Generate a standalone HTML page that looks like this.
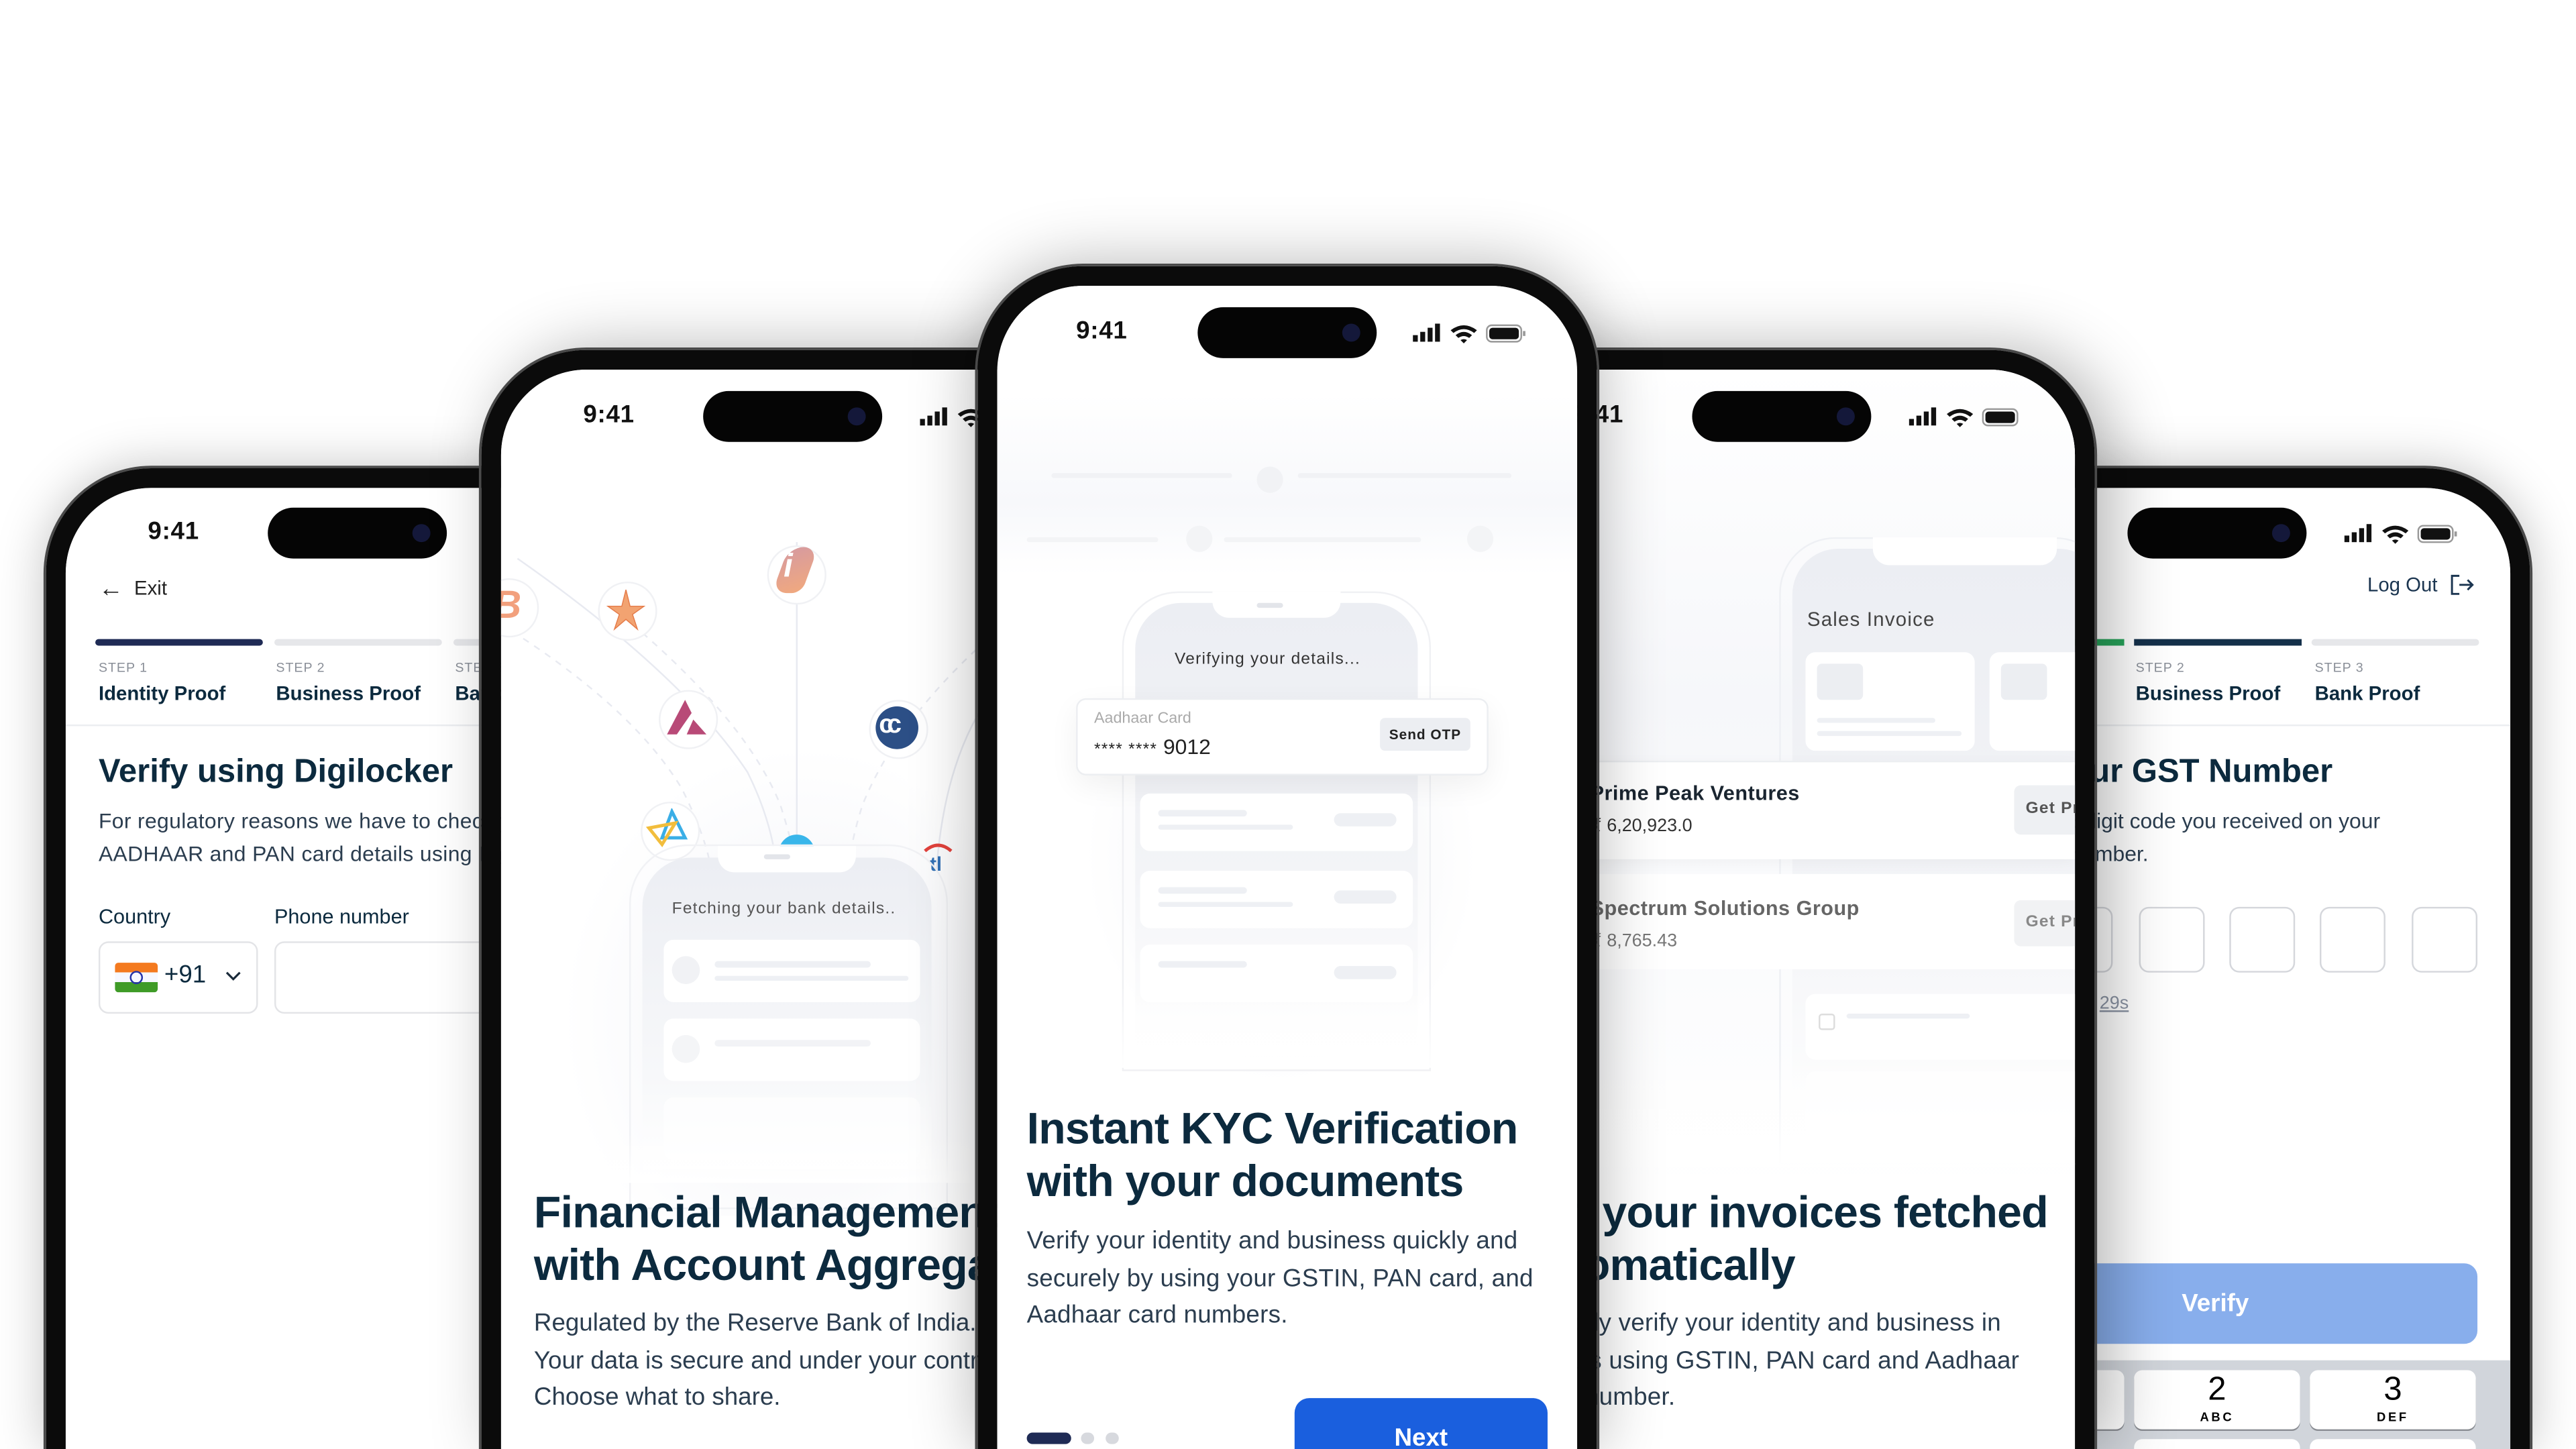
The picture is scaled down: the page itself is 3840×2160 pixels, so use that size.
<!DOCTYPE html>
<html><head><meta charset="utf-8">
<style>
html,body{margin:0;padding:0;background:#fff;width:3840px;height:2160px;overflow:hidden}
#stage{position:absolute;left:0;top:0;width:1568px;height:882px;transform:scale(2.44898);transform-origin:0 0;font-family:"Liberation Sans",sans-serif;overflow:hidden;background:#fff}
.phone{position:absolute;width:353px;border:12px solid #0b0b0b;border-bottom:0;border-radius:64px 64px 0 0;box-shadow:0 0 0 1.5px #4a4a4a, 0 0 30px rgba(0,0,0,.25)}
.scr{position:absolute;left:0;top:0;width:353px;height:100%;border-radius:52px 52px 0 0;overflow:hidden;background:#fff}
.world{position:absolute;width:1568px;height:882px}
.a{position:absolute;white-space:nowrap}
.time{font-size:15px;font-weight:bold;color:#111;letter-spacing:.3px}
.isl{position:absolute;width:109px;height:31px;border-radius:16px;background:#050505}
.isl:after{content:"";position:absolute;right:10px;top:10px;width:11px;height:11px;border-radius:50%;background:#14183a}
.h{color:#0c2a3e;font-weight:bold}
.p{color:#2b3d4f}
.sk{position:absolute;background:#eef0f4;border-radius:4px}
.card{position:absolute;background:#fff;border-radius:6px}
</style></head><body>
<div id="stage">

<!-- PHONE 1 -->
<div class="phone" style="left:28px;top:285px;height:585px">
<div class="scr"><div class="world" style="left:-40px;top:-297px">
 <div class="a time" style="left:90px;top:315px">9:41</div>
 <div class="isl" style="left:163px;top:309px"></div>
 <svg class="a" style="left:294px;top:318px" width="70" height="14"><rect x="0" y="8" width="3" height="4" fill="#111"/><rect x="4.5" y="6" width="3" height="6" fill="#111"/></svg>
 <div class="a" style="left:60px;top:349px;font-size:12px;color:#222"><span style="font-size:15px;position:relative;top:1px">&#8592;</span>&nbsp; Exit</div>
 <div class="a" style="left:58px;top:389px;width:102px;height:4px;background:#1f2b55;border-radius:2px"></div>
 <div class="a" style="left:167px;top:389px;width:102px;height:4px;background:#e6e7ea;border-radius:2px"></div>
 <div class="a" style="left:276px;top:389px;width:102px;height:4px;background:#e6e7ea;border-radius:2px"></div>
 <div class="a" style="left:60px;top:402px;font-size:8px;color:#8a8f98;letter-spacing:.4px">STEP 1</div>
 <div class="a" style="left:168px;top:402px;font-size:8px;color:#8a8f98;letter-spacing:.4px">STEP 2</div>
 <div class="a" style="left:277px;top:402px;font-size:8px;color:#8a8f98;letter-spacing:.4px">STEP 3</div>
 <div class="a h" style="left:60px;top:415px;font-size:12px;font-weight:600">Identity Proof</div>
 <div class="a h" style="left:168px;top:415px;font-size:12px;font-weight:600">Business Proof</div>
 <div class="a h" style="left:277px;top:415px;font-size:12px;font-weight:600">Bank Proof</div>
 <div class="a" style="left:40px;top:441px;width:360px;height:1px;background:#eceef1"></div>
 <div class="a h" style="left:60px;top:459px;font-size:20px;font-weight:600">Verify using Digilocker</div>
 <div class="a p" style="left:60px;top:490px;font-size:13px;line-height:20px;letter-spacing:.15px">For regulatory reasons we have to check your<br>AADHAAR and PAN card details using Digilocker</div>
 <div class="a h" style="left:60px;top:551px;font-size:12.5px;font-weight:normal">Country</div>
 <div class="a h" style="left:167px;top:551px;font-size:12.5px;font-weight:normal">Phone number</div>
 <div class="a" style="left:60px;top:573px;width:95px;height:42px;border:1px solid #e3e4e7;border-radius:6px"></div>
 <div class="a" style="left:167px;top:573px;width:200px;height:42px;border:1px solid #e3e4e7;border-radius:6px"></div>
 <div class="a" style="left:70px;top:586px;width:26px;height:18px;border-radius:2px;background:linear-gradient(#f47a1f 0 33%,#f6f8ff 33% 66%,#3f9b27 66%)"></div>
 <div class="a" style="left:79px;top:591px;width:6px;height:6px;border-radius:50%;border:1px solid #2533a8"></div>
 <div class="a h" style="left:100px;top:585px;font-size:15px;font-weight:normal">+91</div>
 <svg class="a" style="left:136px;top:590px" width="12" height="8"><path d="M2 2 L6 6 L10 2" stroke="#1a2a3a" stroke-width="1.3" fill="none"/></svg>
</div></div></div>

<!-- PHONE 5 -->
<div class="phone" style="left:1163px;top:285px;height:585px">
<div class="scr"><div class="world" style="left:-1175px;top:-297px">
 <div class="isl" style="left:1295px;top:309px"></div>
 <svg class="a" style="left:1427px;top:318px" width="70" height="14"><rect x="0" y="8" width="3" height="4" fill="#111"/><rect x="4.5" y="6" width="3" height="6" fill="#111"/><rect x="9" y="3.5" width="3" height="8.5" fill="#111"/><rect x="13.5" y="1" width="3" height="11" fill="#111"/><path d="M23 5 Q31 -1 39 5 L37.3 6.7 Q31 2 24.7 6.7Z M26 8 Q31 4 36 8 L34.3 9.7 Q31 7.4 27.7 9.7Z M29 11 L31 13 L33 11 Q31 9.8 29 11Z" fill="#111"/><rect x="45" y="2" width="21" height="10" rx="3" fill="none" stroke="#999" stroke-width="1"/><rect x="46.5" y="3.5" width="18" height="7" rx="2" fill="#111"/><rect x="67" y="5.5" width="1.5" height="3" fill="#999"/></svg>
 <div class="a" style="left:1441px;top:349px;font-size:12px;color:#1b3550">Log Out</div>
 <svg class="a" style="left:1491px;top:349px" width="16" height="14"><path d="M6 1.5 H1.5 V12.5 H6 M6 7 H14 M11 4 L14 7 L11 10" stroke="#1b3550" stroke-width="1.2" fill="none"/></svg>
 <div class="a" style="left:1258px;top:389px;width:35px;height:4px;background:#27a35a"></div>
 <div class="a" style="left:1299px;top:389px;width:102px;height:4px;background:#14304a"></div>
 <div class="a" style="left:1407px;top:389px;width:102px;height:4px;background:#e6e7ea;border-radius:2px"></div>
 <div class="a" style="left:1300px;top:402px;font-size:8px;color:#8a8f98;letter-spacing:.4px">STEP 2</div>
 <div class="a" style="left:1409px;top:402px;font-size:8px;color:#8a8f98;letter-spacing:.4px">STEP 3</div>
 <div class="a h" style="left:1300px;top:415px;font-size:12px;font-weight:600">Business Proof</div>
 <div class="a h" style="left:1409px;top:415px;font-size:12px;font-weight:600">Bank Proof</div>
 <div class="a" style="left:1175px;top:441px;width:360px;height:1px;background:#eceef1"></div>
 <div class="a h" style="left:1248px;top:459px;font-size:20px;font-weight:600">Your GST Number</div>
 <div class="a p" style="left:1258px;top:490px;font-size:13px;line-height:20px">6 digit code you received on your</div>
 <div class="a p" style="left:1221px;top:510px;font-size:13px;line-height:20px">phone number.</div>
 <div class="a" style="left:1246px;top:552px;width:38px;height:38px;border:1px solid #d5d7dc;border-radius:6px"></div>
 <div class="a" style="left:1302px;top:552px;width:38px;height:38px;border:1px solid #d5d7dc;border-radius:6px"></div>
 <div class="a" style="left:1357px;top:552px;width:38px;height:38px;border:1px solid #d5d7dc;border-radius:6px"></div>
 <div class="a" style="left:1412px;top:552px;width:38px;height:38px;border:1px solid #d5d7dc;border-radius:6px"></div>
 <div class="a" style="left:1468px;top:552px;width:38px;height:38px;border:1px solid #d5d7dc;border-radius:6px"></div>
 <div class="a" style="left:1278px;top:605px;font-size:11px;color:#8a93a3;text-decoration:underline">29s</div>
 <div class="a" style="left:1190px;top:769px;width:318px;height:49px;background:#88aeec;border-radius:8px"></div>
 <div class="a" style="left:1328px;top:785px;font-size:15px;color:#fff;font-weight:600">Verify</div>
 <div class="a" style="left:1175px;top:828px;width:360px;height:60px;background:#d1d5db"></div>
 <div class="a" style="left:1190px;top:834px;width:103px;height:36px;background:#fff;border-radius:5px;box-shadow:0 1px 0 #8a8d93"></div>
 <div class="a" style="left:1299px;top:834px;width:101px;height:36px;background:#fff;border-radius:5px;box-shadow:0 1px 0 #8a8d93"></div>
 <div class="a" style="left:1406px;top:834px;width:101px;height:36px;background:#fff;border-radius:5px;box-shadow:0 1px 0 #8a8d93"></div>
 <div class="a" style="left:1299px;top:835px;width:101px;text-align:center;font-size:20px;line-height:22px;color:#000">2</div>
 <div class="a" style="left:1299px;top:858px;width:101px;text-align:center;font-size:7.5px;font-weight:bold;letter-spacing:1.5px">ABC</div>
 <div class="a" style="left:1406px;top:835px;width:101px;text-align:center;font-size:20px;line-height:22px;color:#000">3</div>
 <div class="a" style="left:1406px;top:858px;width:101px;text-align:center;font-size:7.5px;font-weight:bold;letter-spacing:1.5px">DEF</div>
 <div class="a" style="left:1299px;top:876px;width:101px;height:20px;background:#fff;border-radius:5px"></div>
 <div class="a" style="left:1406px;top:876px;width:101px;height:20px;background:#fff;border-radius:5px"></div>
</div></div></div>

<!-- PHONE 2 -->
<div class="phone" style="left:293px;top:213px;height:657px;box-shadow:0 0 0 1.5px #4a4a4a, 10px 0 40px rgba(0,0,0,.3)">
<div class="scr"><div class="world" style="left:-305px;top:-225px">
 <div class="a time" style="left:355px;top:244px">9:41</div>
 <div class="isl" style="left:428px;top:238px"></div>
 <svg class="a" style="left:560px;top:247px" width="70" height="14"><rect x="0" y="8" width="3" height="4" fill="#111"/><rect x="4.5" y="6" width="3" height="6" fill="#111"/><rect x="9" y="3.5" width="3" height="8.5" fill="#111"/><rect x="13.5" y="1" width="3" height="11" fill="#111"/><path d="M23 5 Q31 -1 39 5 L37.3 6.7 Q31 2 24.7 6.7Z M26 8 Q31 4 36 8 L34.3 9.7 Q31 7.4 27.7 9.7Z M29 11 L31 13 L33 11 Q31 9.8 29 11Z" fill="#111"/></svg>
 <div class="a" style="left:330px;top:440px;width:320px;height:300px;background:radial-gradient(ellipse at 50% 60%,#f1f2f7 0%,rgba(255,255,255,0) 65%)"></div>
 <svg class="a" style="left:305px;top:290px" width="300" height="240" fill="none" stroke="#e8eaf1" stroke-width="1">
  <path d="M10 50 Q110 120 150 180 Q165 210 168 240"/>
  <path d="M0 90 Q80 140 110 190 Q125 220 128 240" stroke-dasharray="4 4"/>
  <path d="M80 90 Q150 150 170 200 Q178 225 180 240" stroke-dasharray="4 4"/>
  <path d="M180 40 V240"/>
  <path d="M295 100 Q240 150 220 200 Q212 225 212 240" stroke-dasharray="4 4"/>
  <path d="M300 130 Q270 170 265 240"/>
 </svg>
 <div class="a" style="left:292px;top:352px;width:34px;height:34px;border-radius:50%;border:1px solid #f0f1f4;background:#fff"></div>
 <div class="a" style="left:300px;top:355px;font-size:24px;font-weight:bold;color:#f2a07d;font-style:italic">B</div>
 <div class="a" style="left:364px;top:354px;width:34px;height:34px;border-radius:50%;border:1px solid #f0f1f4;background:#fff"></div>
 <svg class="a" style="left:369px;top:358px" width="24" height="26"><path d="M12 1 L14.5 11 L23 11 L16 16 L19 25 L12 19 L5 25 L8 16 L1 11 L9.5 11Z" fill="#f2a371" stroke="#e57c4a" stroke-width=".6"/></svg>
 <div class="a" style="left:467px;top:332px;width:34px;height:34px;border-radius:50%;border:1px solid #f0f1f4;background:#fff"></div>
 <div class="a" style="left:475px;top:333px;width:18px;height:28px;border-radius:9px 9px 6px 9px;background:linear-gradient(160deg,#d69aa0,#f1a97e);transform:skewX(-20deg)"></div>
 <div class="a" style="left:477px;top:334px;font-size:20px;font-weight:bold;color:#fff;font-style:italic">i</div>
 <div class="a" style="left:401px;top:420px;width:34px;height:34px;border-radius:50%;border:1px solid #f0f1f4;background:#fff"></div>
 <svg class="a" style="left:405px;top:424px" width="26" height="24"><path d="M12 2 L16 10 L7 23 L1 23Z M17 14 L25 23 L13 23 Z" fill="#b84a77"/></svg>
 <div class="a" style="left:529px;top:426px;width:34px;height:34px;border-radius:50%;border:1px solid #f0f1f4;background:#fff"></div>
 <div class="a" style="left:533px;top:430px;width:26px;height:26px;border-radius:50%;background:#2c4f86"></div>
 <div class="a" style="left:535px;top:433px;font-size:16px;font-weight:bold;color:#fff;letter-spacing:-4px">cc</div>
 <div class="a" style="left:390px;top:488px;width:34px;height:34px;border-radius:50%;border:1px solid #f0f1f4;background:#fff"></div>
 <svg class="a" style="left:393px;top:492px" width="28" height="24"><path d="M16 2 L24 18 L10 18 Z" stroke="#3aaee6" stroke-width="2" fill="none"/><path d="M2 12 L18 9 L10 22 Z" stroke="#f2bd3c" stroke-width="2" fill="none"/></svg>
 <div class="a" style="left:474px;top:508px;width:22px;height:11px;border-radius:11px 11px 0 0;background:#39b6ea"></div>
 <svg class="a" style="left:561px;top:512px" width="20" height="20"><path d="M2 6 Q10 -1 18 6" stroke="#e2423c" stroke-width="2" fill="none"/><text x="5" y="18" font-size="12" font-weight="bold" fill="#3371b6" font-family="Liberation Sans">tl</text></svg>
 <div class="a" style="left:383px;top:514px;width:192px;height:220px;border:1.5px solid #f1f2f5;border-radius:36px 36px 0 0"></div>
 <div class="a" style="left:391px;top:522px;width:176px;height:190px;border-radius:30px 30px 0 0;background:linear-gradient(#eceef3,#f7f8fa 70%,#fff)"></div>
 <div class="a" style="left:437px;top:515px;width:84px;height:16px;background:#fff;border-radius:0 0 10px 10px"></div>
 <div class="a" style="left:465px;top:520px;width:16px;height:2.5px;background:#e3e5ea;border-radius:2px"></div>
 <div class="a" style="left:409px;top:548px;font-size:10px;color:#555;letter-spacing:.5px">Fetching your bank details..</div>
 <div class="card" style="left:404px;top:572px;width:156px;height:38px"></div>
 <div class="a" style="left:409px;top:582px;width:17px;height:17px;border-radius:50%;background:#f1f2f5"></div>
 <div class="sk" style="left:435px;top:585px;width:95px;height:4px"></div>
 <div class="sk" style="left:435px;top:594px;width:118px;height:3px"></div>
 <div class="card" style="left:404px;top:620px;width:156px;height:38px"></div>
 <div class="a" style="left:409px;top:630px;width:17px;height:17px;border-radius:50%;background:#f4f5f7"></div>
 <div class="sk" style="left:435px;top:633px;width:95px;height:4px;background:#f2f3f6"></div>
 <div class="card" style="left:404px;top:668px;width:156px;height:38px;opacity:.6"></div>
 <div class="a" style="left:330px;top:690px;width:260px;height:30px;background:linear-gradient(rgba(255,255,255,0),#fff)"></div>
 <div class="a h" style="left:325px;top:722px;font-size:27px;line-height:32px;letter-spacing:-.3px">Financial Management<br>with Account Aggregator</div>
 <div class="a p" style="left:325px;top:795px;font-size:15px;line-height:22.5px">Regulated by the Reserve Bank of India.<br>Your data is secure and under your control.<br>Choose what to share.</div>
</div></div></div>

<!-- PHONE 4 -->
<div class="phone" style="left:898px;top:213px;height:657px;box-shadow:0 0 0 1.5px #4a4a4a, 10px 0 40px rgba(0,0,0,.3)">
<div class="scr"><div class="world" style="left:-910px;top:-225px">
 <div class="a" style="left:910px;top:225px;width:353px;height:500px;background:linear-gradient(#fff,#f6f7fa 40%,#fff)"></div>
 <div class="a time" style="left:957px;top:244px">9:41</div>
 <div class="isl" style="left:1030px;top:238px"></div>
 <svg class="a" style="left:1162px;top:247px" width="70" height="14"><rect x="0" y="8" width="3" height="4" fill="#111"/><rect x="4.5" y="6" width="3" height="6" fill="#111"/><rect x="9" y="3.5" width="3" height="8.5" fill="#111"/><rect x="13.5" y="1" width="3" height="11" fill="#111"/><path d="M23 5 Q31 -1 39 5 L37.3 6.7 Q31 2 24.7 6.7Z M26 8 Q31 4 36 8 L34.3 9.7 Q31 7.4 27.7 9.7Z M29 11 L31 13 L33 11 Q31 9.8 29 11Z" fill="#111"/><rect x="45" y="2" width="21" height="10" rx="3" fill="none" stroke="#999" stroke-width="1"/><rect x="46.5" y="3.5" width="18" height="7" rx="2" fill="#111"/></svg>
 <div class="a" style="left:1083px;top:327px;width:200px;height:380px;border:1.5px solid #eef0f4;border-radius:34px 34px 0 0"></div>
 <div class="a" style="left:1091px;top:334px;width:190px;height:360px;border-radius:28px 28px 0 0;background:linear-gradient(#eceef3,#f3f4f7 60%,#fff)"></div>
 <div class="a" style="left:1140px;top:327px;width:112px;height:17px;background:#fff;border-radius:0 0 10px 10px"></div>
 <div class="a" style="left:1100px;top:370px;font-size:12px;color:#444;letter-spacing:.5px">Sales Invoice</div>
 <div class="card" style="left:1099px;top:397px;width:103px;height:60px"></div>
 <div class="a" style="left:1106px;top:404px;width:28px;height:22px;background:#eceef2;border-radius:3px"></div>
 <div class="sk" style="left:1106px;top:437px;width:72px;height:3px"></div>
 <div class="sk" style="left:1106px;top:445px;width:88px;height:3px"></div>
 <div class="card" style="left:1211px;top:397px;width:80px;height:60px"></div>
 <div class="a" style="left:1218px;top:404px;width:28px;height:22px;background:#eceef2;border-radius:3px"></div>
 <div class="a" style="left:910px;top:463px;width:353px;height:59px;background:#fff;border-top:1px solid #eceef1;box-shadow:0 2px 8px rgba(0,0,0,.04)"></div>
 <div class="a" style="left:968px;top:476px;font-size:12.5px;color:#1a2530;font-weight:600;letter-spacing:.2px">Prime Peak Ventures</div>
 <div class="a" style="left:968px;top:496px;font-size:11px;color:#333">₹ 6,20,923.0</div>
 <div class="a" style="left:1226px;top:478px;width:60px;height:30px;background:#eef0f3;border-radius:4px"></div>
 <div class="a" style="left:1233px;top:487px;font-size:10px;color:#555;font-weight:bold;letter-spacing:.5px">Get Price</div>
 <div class="a" style="left:910px;top:532px;width:353px;height:58px;background:#fff"></div>
 <div class="a" style="left:968px;top:546px;font-size:12.5px;color:#666;font-weight:600;letter-spacing:.2px">Spectrum Solutions Group</div>
 <div class="a" style="left:968px;top:566px;font-size:11px;color:#777">₹ 8,765.43</div>
 <div class="a" style="left:1226px;top:548px;width:60px;height:28px;background:#f1f2f4;border-radius:4px"></div>
 <div class="a" style="left:1233px;top:556px;font-size:10px;color:#888;font-weight:bold;letter-spacing:.5px">Get Price</div>
 <div class="card" style="left:1099px;top:605px;width:170px;height:40px"></div>
 <div class="a" style="left:1107px;top:617px;width:8px;height:8px;border:1px solid #ddd;border-radius:2px"></div>
 <div class="sk" style="left:1124px;top:617px;width:75px;height:3px"></div>
 <div class="card" style="left:1099px;top:652px;width:170px;height:40px;opacity:.6"></div>
 <div class="a" style="left:910px;top:640px;width:353px;height:70px;background:linear-gradient(rgba(255,255,255,0),#fff)"></div>
 <div class="a h" style="left:924px;top:722px;font-size:27px;line-height:32px;letter-spacing:-.3px">Get your invoices fetched<br>automatically</div>
 <div class="a p" style="left:931px;top:795px;font-size:15px;line-height:22.5px;letter-spacing:.1px">Quickly verify your identity and business in<br>details using GSTIN, PAN card and Aadhaar<br>card number.</div>
</div></div></div>

<!-- PHONE 3 -->
<div class="phone" style="left:595px;top:162px;height:708px;box-shadow:0 0 0 1.5px #4a4a4a, 0 0 40px rgba(0,0,0,.3)">
<div class="scr"><div class="world" style="left:-607px;top:-174px">
 <div class="a time" style="left:655px;top:193px">9:41</div>
 <div class="isl" style="left:729px;top:187px"></div>
 <svg class="a" style="left:860px;top:196px" width="70" height="14"><rect x="0" y="8" width="3" height="4" fill="#111"/><rect x="4.5" y="6" width="3" height="6" fill="#111"/><rect x="9" y="3.5" width="3" height="8.5" fill="#111"/><rect x="13.5" y="1" width="3" height="11" fill="#111"/><path d="M23 5 Q31 -1 39 5 L37.3 6.7 Q31 2 24.7 6.7Z M26 8 Q31 4 36 8 L34.3 9.7 Q31 7.4 27.7 9.7Z M29 11 L31 13 L33 11 Q31 9.8 29 11Z" fill="#111"/><rect x="45" y="2" width="21" height="10" rx="3" fill="none" stroke="#999" stroke-width="1"/><rect x="46.5" y="3.5" width="18" height="7" rx="2" fill="#111"/><rect x="67" y="5.5" width="1.5" height="3" fill="#999"/></svg>
 <div class="a" style="left:607px;top:240px;width:353px;height:110px;background:linear-gradient(#fff,#f7f8fb 60%,#fff)"></div>
 <div class="sk" style="left:640px;top:288px;width:110px;height:3px;background:#f1f2f5"></div>
 <div class="a" style="left:765px;top:284px;width:16px;height:16px;border-radius:50%;background:#f1f2f5"></div>
 <div class="sk" style="left:790px;top:288px;width:130px;height:3px;background:#f1f2f5"></div>
 <div class="sk" style="left:625px;top:327px;width:80px;height:3px;background:#f3f4f6"></div>
 <div class="a" style="left:722px;top:320px;width:16px;height:16px;border-radius:50%;background:#f3f4f6"></div>
 <div class="sk" style="left:745px;top:327px;width:120px;height:3px;background:#f3f4f6"></div>
 <div class="a" style="left:893px;top:320px;width:16px;height:16px;border-radius:50%;background:#f3f4f6"></div>
 <div class="a" style="left:660px;top:380px;width:240px;height:280px;background:radial-gradient(ellipse at 50% 50%,#f0f1f5 0%,rgba(255,255,255,0) 70%)"></div>
 <div class="a" style="left:683px;top:360px;width:186px;height:290px;border:1.5px solid #f0f1f4;border-radius:34px 34px 0 0"></div>
 <div class="a" style="left:691px;top:367px;width:172px;height:275px;border-radius:28px 28px 0 0;background:linear-gradient(#eceef3,#f3f4f7 60%,#fff)"></div>
 <div class="a" style="left:738px;top:360px;width:78px;height:16px;background:#fff;border-radius:0 0 10px 10px"></div>
 <div class="a" style="left:765px;top:367px;width:16px;height:2.5px;background:#e3e5ea;border-radius:2px"></div>
 <div class="a" style="left:715px;top:396px;font-size:10px;color:#333;letter-spacing:.5px">Verifying your details...</div>
 <div class="card" style="left:655px;top:425px;width:249px;height:45px;border:1px solid #eceef1;box-shadow:0 6px 18px rgba(0,0,0,.06)"></div>
 <div class="a" style="left:666px;top:432px;font-size:9.5px;color:#aaa">Aadhaar Card</div>
 <div class="a" style="left:666px;top:447px;font-size:13px;color:#222"><span style="font-size:10px;letter-spacing:.5px">**** ****</span> 9012</div>
 <div class="a" style="left:840px;top:437px;width:55px;height:20px;background:#eceef2;border-radius:3px"></div>
 <div class="a" style="left:840px;top:442px;width:55px;text-align:center;font-size:8.5px;color:#222;font-weight:600;letter-spacing:.4px">Send OTP</div>
 <div class="card" style="left:694px;top:483px;width:166px;height:35px"></div>
 <div class="sk" style="left:705px;top:493px;width:54px;height:4px"></div>
 <div class="sk" style="left:705px;top:502px;width:82px;height:3px"></div>
 <div class="sk" style="left:812px;top:495px;width:38px;height:8px"></div>
 <div class="card" style="left:694px;top:530px;width:166px;height:35px"></div>
 <div class="sk" style="left:705px;top:540px;width:54px;height:4px"></div>
 <div class="sk" style="left:705px;top:549px;width:82px;height:3px"></div>
 <div class="sk" style="left:812px;top:542px;width:38px;height:8px"></div>
 <div class="card" style="left:694px;top:575px;width:166px;height:35px"></div>
 <div class="sk" style="left:705px;top:585px;width:54px;height:4px"></div>
 <div class="sk" style="left:812px;top:588px;width:38px;height:8px"></div>
 <div class="a" style="left:640px;top:600px;width:280px;height:50px;background:linear-gradient(rgba(255,255,255,0),#fff)"></div>
 <div class="a h" style="left:625px;top:671px;font-size:27px;line-height:32px;letter-spacing:-.3px">Instant KYC Verification<br>with your documents</div>
 <div class="a p" style="left:625px;top:745px;font-size:15px;line-height:22.5px;letter-spacing:.1px">Verify your identity and business quickly and<br>securely by using your GSTIN, PAN card, and<br>Aadhaar card numbers.</div>
 <div class="a" style="left:625px;top:872px;width:27px;height:7px;border-radius:4px;background:#1f2b55"></div>
 <div class="a" style="left:658px;top:872px;width:8px;height:7px;border-radius:4px;background:#d7d9de"></div>
 <div class="a" style="left:673px;top:872px;width:8px;height:7px;border-radius:4px;background:#d7d9de"></div>
 <div class="a" style="left:788px;top:851px;width:154px;height:31px;border-radius:9px 9px 0 0;background:#1a5fde"></div>
 <div class="a" style="left:788px;top:867px;width:154px;text-align:center;font-size:15px;color:#fff;font-weight:600">Next</div>
</div></div></div>

</div>
</body></html>
